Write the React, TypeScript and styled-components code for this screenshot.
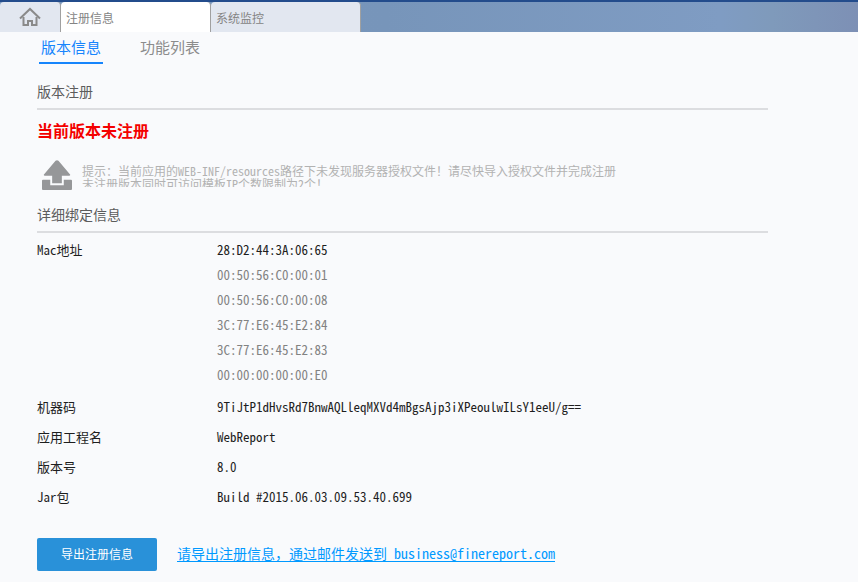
import React from "react";
import styled, { createGlobalStyle } from "styled-components";

const GlobalStyle = createGlobalStyle`
  * { box-sizing: border-box; }
  body {
    margin: 0;
    background: #f9fafc;
    color: #1e1e1e;
    font-family: "Noto Sans CJK SC", "Liberation Sans", sans-serif;
    font-size: 13px;
  }
  button { font: inherit; border: 0; padding: 0; background: none; cursor: pointer; }
`;

const TabStrip = styled.nav`
  display: flex;
  height: 32px;
  border-top: 2px solid #234c8c;
  background: linear-gradient(90deg, #7a98bf 0%, #7795ba 45%, #7f9cc3 84%, #7f9abb 90%, #7d90b5 100%);
`;

const WindowTab = styled.button<{ $active?: boolean; $narrow?: boolean }>`
  display: flex;
  align-items: center;
  justify-content: ${(p) => (p.$narrow ? "center" : "flex-start")};
  width: ${(p) => (p.$narrow ? 61 : 150)}px;
  border-radius: 4px 4px 0 0;
  color: #848484;
  && {
    padding-left: ${(p) => (p.$narrow ? 0 : 5)}px;
    border-right: 1px solid #a0a0a0;
    background: ${(p) => (p.$active ? "#ffffff" : "#e2e7f0")};
    font-size: 12px;
  }
`;

const Page = styled.main`
  padding: 0 90px 0 37px;
`;

const SubTabs = styled.div`
  display: flex;
  gap: 35px;
  padding-left: 2px;
`;

const SubTab = styled.button<{ $active?: boolean }>`
  && {
    height: 32px;
    padding: 0 2px;
    border-bottom: 2px solid ${(p) => (p.$active ? "#1685fc" : "transparent")};
    color: ${(p) => (p.$active ? "#1685fc" : "#8c8c8c")};
    font-size: 15px;
    line-height: 30px;
  }
`;

const SectionTitle = styled.h2<{ $first?: boolean }>`
  margin: ${(p) => (p.$first ? 14 : 10)}px 0 0;
  height: 32px;
  border-bottom: 2px solid #dcdde0;
  color: #5c5c5c;
  font-size: 14px;
  font-weight: 400;
  line-height: 26px;
`;

const Status = styled.p`
  margin: 8px 0 18px;
  color: #f40000;
  font-size: 16px;
  font-weight: 700;
  line-height: 24px;
`;

const Hint = styled.div`
  display: flex;
  gap: 10px;
  height: 31px;
  padding-left: 5px;
`;

const HintText = styled.p`
  margin: 4px 0 0;
  height: 23px;
  overflow: hidden;
  color: #b2b2b2;
  font-size: 12px;
  line-height: 13px;
  font-feature-settings: "hwid";
`;

const Details = styled.dl`
  display: grid;
  grid-template-columns: 180px 1fr;
  row-gap: 5px;
  margin: 4px 0 0;
  line-height: 25px;
  font-feature-settings: "hwid";
`;

const Term = styled.dt``;

const Value = styled.dd`
  margin: 0;
`;

const AddressList = styled.ul`
  margin: 0 0 2px;
  padding: 0;
  list-style: none;
`;

const Address = styled.li<{ $current?: boolean }>`
  color: ${(p) => (p.$current ? "#1e1e1e" : "#828282")};
`;

const Actions = styled.div`
  display: flex;
  align-items: center;
  gap: 20px;
  margin-top: 29px;
`;

const ExportButton = styled.button`
  && {
    width: 120px;
    height: 33px;
    padding-bottom: 2px;
    border-radius: 2px;
    background: #2991d9;
    color: #ffffff;
    font-size: 12px;
  }
`;

const MailLink = styled.a`
  padding-bottom: 4px;
  color: #0099ff;
  font-size: 14px;
  line-height: 20px;
  text-underline-offset: 2px;
  text-decoration-skip-ink: none;
`;

const MailAddress = styled.span`
  font-feature-settings: "hwid", "liga" 0;
`;

const HomeIcon = () => (
  <svg width="22" height="20" viewBox="0 0 22 20" fill="none" stroke="#8a8a8a" strokeWidth="2" aria-hidden="true">
    <path d="M1 11.5 11 2l10 9.5" />
    <path d="M4.5 10v8H9v-4h4v4h4.500v-8" />
  </svg>
);

const UploadIcon = () => (
  <svg width="30" height="30" viewBox="0 0 31 31" fill="#969799" aria-hidden="true">
    <path d="M14 .7q1.500-1 3 0L29 15q.6 1.300-1 1.300H20.500V24h-10v-7.700H3q-1.600 0-1-1.300z" />
    <path d="M1 20.500h7.500V26h14v-5.500H30q1 0 1 1V30q0 1-1 1H1q-1 0-1-1v-8.500q0-1 1-1z" />
  </svg>
);

const addresses = [
  "28:D2:44:3A:06:65",
  "00:50:56:C0:00:01",
  "00:50:56:C0:00:08",
  "3C:77:E6:45:E2:84",
  "3C:77:E6:45:E2:83",
  "00:00:00:00:00:E0",
];

const details = [
  ["机器码", "9TiJtP1dHvsRd7BnwAQLleqMXVd4mBgsAjp3iXPeoulwILsY1eeU/g=="],
  ["应用工程名", "WebReport"],
  ["版本号", "8.0"],
  ["Jar包", "Build #2015.06.03.09.53.40.699"],
];

export default function App() {
  return (
    <>
      <GlobalStyle />
      <TabStrip>
        <WindowTab $narrow aria-label="主页">
          <HomeIcon />
        </WindowTab>
        <WindowTab $active>注册信息</WindowTab>
        <WindowTab>系统监控</WindowTab>
      </TabStrip>
      <Page>
        <SubTabs>
          <SubTab $active>版本信息</SubTab>
          <SubTab>功能列表</SubTab>
        </SubTabs>
        <SectionTitle $first>版本注册</SectionTitle>
        <Status>当前版本未注册</Status>
        <Hint>
          <UploadIcon />
          <HintText>
            提示：当前应用的WEB-INF/resources路径下未发现服务器授权文件！请尽快导入授权文件并完成注册
            <br />
            未注册版本同时可访问模板IP个数限制为2个！
          </HintText>
        </Hint>
        <SectionTitle>详细绑定信息</SectionTitle>
        <Details>
          <Term>Mac地址</Term>
          <Value>
            <AddressList>
              {addresses.map((address, i) => (
                <Address key={address} $current={i === 0}>
                  {address}
                </Address>
              ))}
            </AddressList>
          </Value>
          {details.map(([term, value]) => (
            <React.Fragment key={term}>
              <Term>{term}</Term>
              <Value>{value}</Value>
            </React.Fragment>
          ))}
        </Details>
        <Actions>
          <ExportButton>导出注册信息</ExportButton>
          <MailLink href="mailto:business@finereport.com">
            请导出注册信息，通过邮件发送到<MailAddress> business@finereport.com</MailAddress>
          </MailLink>
        </Actions>
      </Page>
    </>
  );
}
